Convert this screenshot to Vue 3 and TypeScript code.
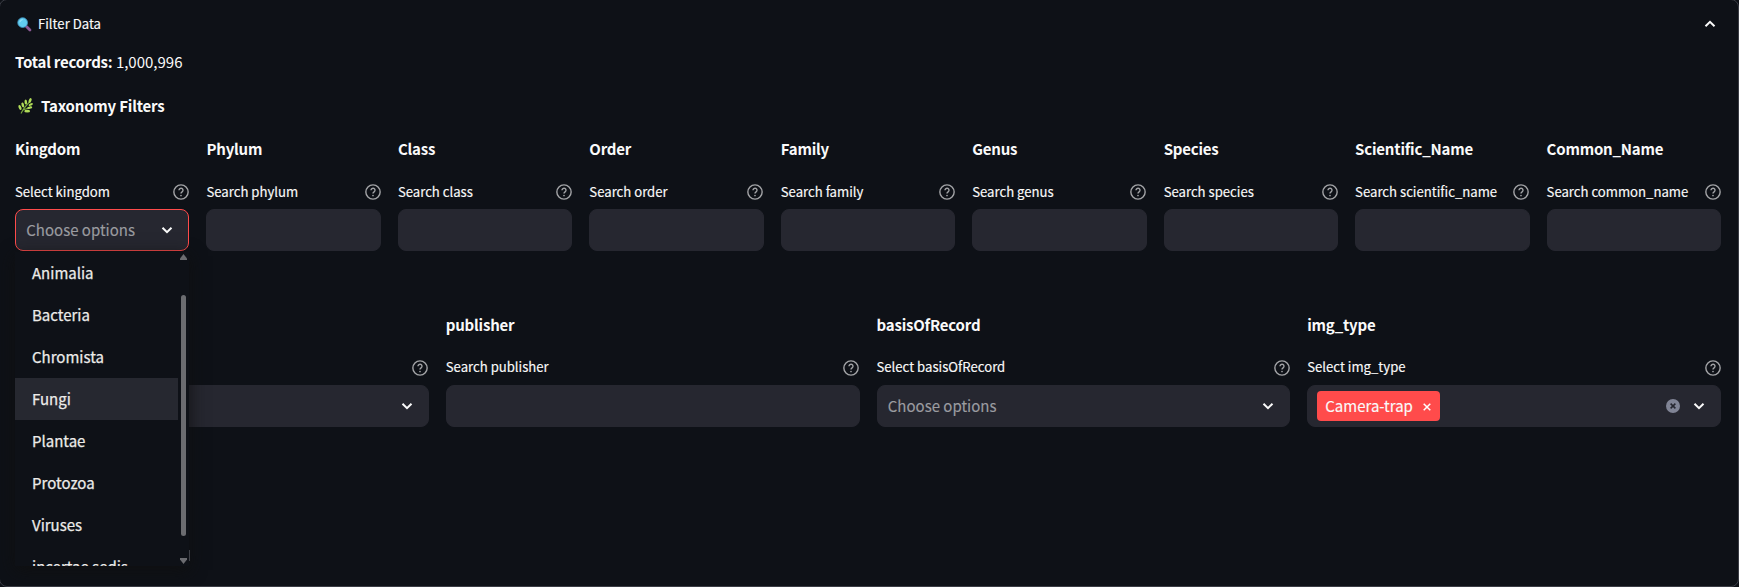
<script setup lang="ts">
interface Field {
  title: string
  label: string
  kind: 'select' | 'text' | 'tags'
  open?: boolean
}

const search = (title: string): Field => ({ title, label: `Search ${title.toLowerCase()}`, kind: 'text' })

const taxonomy: Field[] = [
  { title: 'Kingdom', label: 'Select kingdom', kind: 'select', open: true },
  ...['Phylum', 'Class', 'Order', 'Family', 'Genus', 'Species', 'Scientific_Name', 'Common_Name'].map(search),
]
const metadata: Field[] = [
  { title: '', label: '', kind: 'select' },
  search('publisher'),
  { title: 'basisOfRecord', label: 'Select basisOfRecord', kind: 'select' },
  { title: 'img_type', label: 'Select img_type', kind: 'tags' },
]
const rows = [taxonomy, metadata]
const kingdoms = ['Animalia', 'Bacteria', 'Chromista', 'Fungi', 'Plantae', 'Protozoa', 'Viruses', 'incertae sedis']
</script>

<template>
  <div class="page">
    <section class="panel">
      <header class="summary">
        <svg class="lens" viewBox="0 0 16 16">
          <path d="M9.5 9.5 13.8 13.8" stroke="#8c5a96" stroke-width="3" stroke-linecap="round" />
          <circle cx="6" cy="6" r="5.2" fill="#62cdf0" stroke="#3e8fbd" stroke-width=".9" />
          <path d="M3 5.5Q3.5 3 6 2.8" stroke="#a5e9fb" stroke-width="1" fill="none" />
        </svg>
        <span class="t14">Filter Data</span>
        <svg class="chev up" viewBox="0 0 12 8"><path d="M1.5 6.3 6 1.8l4.5 4.5" /></svg>
      </header>
      <p class="total"><b>Total records:</b> 1,000,996</p>
      <h4 class="section">
        <svg class="herb" viewBox="0 0 16 16">
          <path d="M3 15.5Q5.5 10 12 3.5M5 12Q8 11 13 9" stroke="#78a83c" stroke-width="1.1" fill="none" />
          <g fill="#b0dc58">
            <ellipse cx="12.1" cy="2.5" rx="1.3" ry="2.5" transform="rotate(22 12.1 2.5)" />
            <ellipse cx="7.8" cy="4" rx="1.3" ry="2.6" transform="rotate(-3 7.8 4)" />
            <ellipse cx="4.8" cy="7" rx="1.3" ry="2.5" transform="rotate(-15 4.8 7)" />
            <ellipse cx="2" cy="9.5" rx="1.3" ry="2.7" transform="rotate(-20 2 9.5)" />
            <ellipse cx="12.8" cy="6.5" rx="1.1" ry="2.3" transform="rotate(65 12.8 6.5)" />
            <ellipse cx="11.7" cy="9.7" rx="1.2" ry="2.6" transform="rotate(78 11.7 9.7)" />
            <ellipse cx="9.2" cy="13.2" rx="1.4" ry="2.9" transform="rotate(90 9.2 13.2)" />
          </g>
        </svg>
        <span>Taxonomy Filters</span>
      </h4>

      <div v-for="(row, r) in rows" :key="r" class="row" :class="r ? 'cols4' : 'cols9'">
        <div v-for="f in row" :key="f.title" class="field">
          <h4 class="title">{{ f.title }}</h4>
          <div class="label">
            <span class="t14">{{ f.label }}</span>
            <svg class="help" viewBox="0 0 16 16">
              <circle cx="8" cy="8" r="7.15" />
              <path d="M6 6.3a2 2 0 1 1 3.1 1.6C8.4 8.4 8 8.7 8 9.5" />
              <circle class="dot" cx="8" cy="11.5" r=".85" />
            </svg>
          </div>
          <div class="control" :class="{ active: f.open }">
            <span v-if="f.kind === 'tags'" class="tag">
              <span class="tagtext">Camera-trap</span>
              <svg class="cross" viewBox="0 0 8 8"><path d="M.7.7l6.6 6.6M7.3.7.7 7.3" /></svg>
            </span>
            <span v-else-if="f.kind === 'select' && f.title" class="placeholder">Choose options</span>
            <svg v-if="f.kind === 'tags'" class="clear" viewBox="0 0 14 14">
              <circle cx="7" cy="7" r="7" /><path d="M4.6 4.6l4.8 4.8M9.4 4.6 4.6 9.4" />
            </svg>
            <svg v-if="f.kind !== 'text'" class="chev down" viewBox="0 0 12 8"><path d="M1.5 1.7 6 6.2l4.5-4.5" /></svg>
          </div>
          <div v-if="f.open" class="menu">
            <ul class="options">
              <li v-for="k in kingdoms" :key="k" :class="{ hover: k === 'Fungi' }">{{ k }}</li>
            </ul>
            <div class="scrollbar">
              <svg viewBox="0 0 7 6"><path d="M3.5 0 7 4.5V6H0V4.5z" /></svg>
              <i class="thumb"></i>
              <svg viewBox="0 0 7 6"><path d="M3.5 6 7 1.5V0H0v1.5z" /></svg>
            </div>
            <i class="edge"></i>
          </div>
        </div>
      </div>
    </section>
  </div>
</template>

<style>
html,
body {
  margin: 0;
  background: #0e1117;
}
</style>

<style scoped>
.page {
  height: 587px;
  overflow: hidden;
  background: #0e1117;
  color: #fafafa;
  font: 400 15px/24px "Noto Sans CJK SC", "Noto Sans", sans-serif;
}
.panel {
  box-sizing: border-box;
  width: 1740px;
  height: 588px;
  margin: -1px 0 0 -1px;
  padding: 0 17px 0 15px;
  border: 1px solid #3b3d45;
  border-radius: 8px;
}
svg { display: block; flex: none; }
.t14 { font-size: 13.15px; -webkit-text-stroke: 0.15px; }
.summary {
  display: flex;
  align-items: center;
  height: 48px;
}
.lens { width: 15px; height: 15px; margin: 0 6px 0 2px; }
.chev {
  width: 12px;
  height: 8px;
  fill: none;
  stroke: #fafafa;
  stroke-width: 2;
}
.up { margin: 0 5px 1px auto; }
.down { margin: 0 15px 0 auto; }
.total { margin: 2px 0 0; }
b, h4 { font-weight: 700; letter-spacing: -0.2px; }
h4 { margin: 0; font-size: 15px; }
.section {
  display: flex;
  align-items: center;
  height: 24px;
  margin-top: 20px;
}
.herb { width: 16px; height: 16px; margin: 0 7px 0 3px; }
.row { display: grid; column-gap: 17px; }
.cols9 { grid-template-columns: repeat(9, minmax(0, 1fr)); margin-top: 19px; }
.cols4 { grid-template-columns: repeat(4, minmax(0, 1fr)); margin-top: 62px; }
.field { position: relative; }
.title { height: 24px; }
.label {
  display: flex;
  align-items: center;
  justify-content: space-between;
  height: 24px;
  margin-top: 19px;
  white-space: nowrap;
}
.cols4 .t14 { margin-top: -2px; }
.help {
  width: 16px;
  height: 16px;
  margin-right: 0.3px;
  fill: none;
  stroke: #a3a4a7;
  stroke-width: 1.4;
}
.help .dot { fill: #a3a4a7; stroke: none; }
.control {
  box-sizing: border-box;
  display: flex;
  align-items: center;
  height: 42px;
  margin-top: 5px;
  border: 1px solid #262730;
  border-radius: 8px;
  background: #262730;
}
.active { border-color: #ff4b4b; }
.placeholder { margin-left: 10.3px; color: #9b9ca0; -webkit-text-stroke: 0.15px; }
.cols4 .placeholder, .tagtext { margin-bottom: 1px; }
.cols4 .chev, .cols4 .clear { margin-bottom: 1px; }
.tag {
  display: flex;
  align-items: center;
  box-sizing: border-box;
  width: 123px;
  height: 30px;
  margin-left: 9px;
  padding: 0 9px 0 8px;
  justify-content: space-between;
  border-radius: 4px;
  background: #ff4b4b;
  -webkit-text-stroke: 0.15px;
}
.cross { width: 8px; height: 8px; margin-top: 1px; stroke: #fff; stroke-width: 1.5; }
.clear { width: 14px; height: 14px; margin-left: auto; fill: #808495; }
.clear path { stroke: #262730; stroke-width: 1.5; }
.clear + .down { margin-left: 13px; }
.menu {
  position: absolute;
  z-index: 2;
  top: 115px;
  left: 0;
  display: flex;
  width: 174px;
  height: 314px;
  background: #0e1117;
  box-shadow: 0 4px 16px rgba(16, 16, 16, 0.9);
}
.options {
  flex: none;
  width: 163px;
  margin: 0;
  padding: 0;
  overflow: hidden;
  list-style: none;
}
.options li {
  height: 42px;
  padding-left: 17px;
  line-height: 42px;
  color: #ecebe9;
  -webkit-text-stroke: 0.25px;
}
.options .hover { background: #262830; }
.scrollbar {
  display: flex;
  flex-direction: column;
  align-items: center;
  justify-content: space-between;
  width: 10px;
  padding: 2px 0 2px;
}
.scrollbar svg { width: 7px; height: 6px; fill: #6b6c70; }
.thumb {
  width: 5px;
  height: 241px;
  margin-top: 12px;
  border-radius: 3px;
  background: #6b6c70;
}
.edge {
  position: absolute;
  right: -1px;
  bottom: 5px;
  width: 1px;
  height: 11px;
  background: #3f4147;
}
</style>
